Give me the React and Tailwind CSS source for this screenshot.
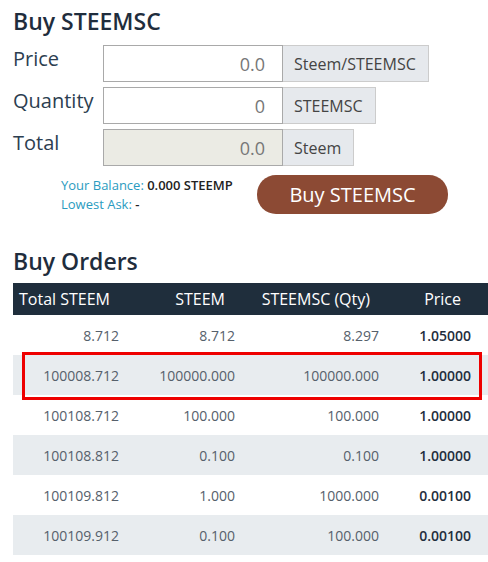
import React from 'react';

const rows = [
  { total: '8.712', steem: '8.712', qty: '8.297', price: '1.05000' },
  { total: '100008.712', steem: '100000.000', qty: '100000.000', price: '1.00000' },
  { total: '100108.712', steem: '100.000', qty: '100.000', price: '1.00000' },
  { total: '100108.812', steem: '0.100', qty: '0.100', price: '1.00000' },
  { total: '100109.812', steem: '1.000', qty: '1000.000', price: '0.00100' },
  { total: '100109.912', steem: '0.100', qty: '100.000', price: '0.00100' },
];

const FormRow = ({ label, value, unit, disabled }) => (
  <div className="flex items-start h-[37px]">
    <div className="w-[90px] text-[20px] leading-[28px] text-[#2c3e50]">{label}</div>
    <input
      readOnly
      value={value}
      className={`w-[180px] h-[37px] border border-[#a9a9a9] text-right pr-[17px] text-[18px] text-[#777] outline-none ${disabled ? 'bg-[#ebebe4]' : 'bg-white'}`}
    />
    <div className="h-[37px] flex items-center pl-[11px] pr-[12px] border border-l-0 border-[#ccc] bg-[#e6e9ed] text-[16px] text-[#444]">
      {unit}
    </div>
  </div>
);

const App = () => {
  return (
    <div className="w-[488px] h-[562px] bg-white overflow-hidden" style={{ fontFamily: '"Open Sans", "Liberation Sans", sans-serif' }}>
      <div className="pl-[13px]">
        <h1 className="pt-[6px] mb-[9px] text-[23px] leading-[30px] font-semibold text-[#1f2d3d]">Buy STEEMSC</h1>

        <div className="flex flex-col gap-[5px]">
          <FormRow label="Price" value="0.0" unit="Steem/STEEMSC" />
          <FormRow label="Quantity" value="0" unit="STEEMSC" />
          <FormRow label="Total" value="0.0" unit="Steem" disabled />
        </div>

        <div className="flex items-start mt-[9px]">
          <div className="w-[244px] pl-[48px] pt-[1px] text-[13px] leading-[19px] text-[#2a9bc0]">
            <div>
              Your Balance: <span className="font-semibold text-[#222]">0.000 STEEMP</span>
            </div>
            <div>
              Lowest Ask: <span className="font-semibold text-[#222]">-</span>
            </div>
          </div>
          <button className="w-[191px] h-[39px] rounded-[19px] bg-[#8c4a34] text-white text-[20px]">
            Buy STEEMSC
          </button>
        </div>

        <h2 className="mt-[32px] mb-[7px] text-[23px] leading-[30px] font-semibold text-[#1f2d3d]">Buy Orders</h2>

        <div className="relative">
          <div className="grid grid-cols-[114px_116px_144px_101px] h-[32px] items-center bg-[#1f2e3c] text-white text-[16px]">
            <div className="pl-[6px]">Total STEEM</div>
            <div className="text-right pr-[18px]">STEEM</div>
            <div className="text-right pr-[17px]">STEEMSC (Qty)</div>
            <div className="text-right pr-[27px]">Price</div>
          </div>
          {rows.map((r, i) => (
            <div
              key={i}
              className={`grid grid-cols-[114px_116px_144px_101px] h-[40px] items-center text-[14px] ${i % 2 === 1 ? 'bg-[#e8ecef]' : 'bg-white'}`}
            >
              <div className="text-right pr-2 text-[#56606b]">{r.total}</div>
              <div className="text-right pr-2 text-[#56606b]">{r.steem}</div>
              <div className="text-right pr-2 text-[#56606b]">{r.qty}</div>
              <div className="text-right pr-[17px] font-semibold text-[#1f2d3d]">{r.price}</div>
            </div>
          ))}
          <div className="absolute left-[9px] top-[69px] w-[460px] h-[48px] border-[3px] border-[#ee0000] pointer-events-none" />
        </div>
      </div>
    </div>
  );
};

export default App;
